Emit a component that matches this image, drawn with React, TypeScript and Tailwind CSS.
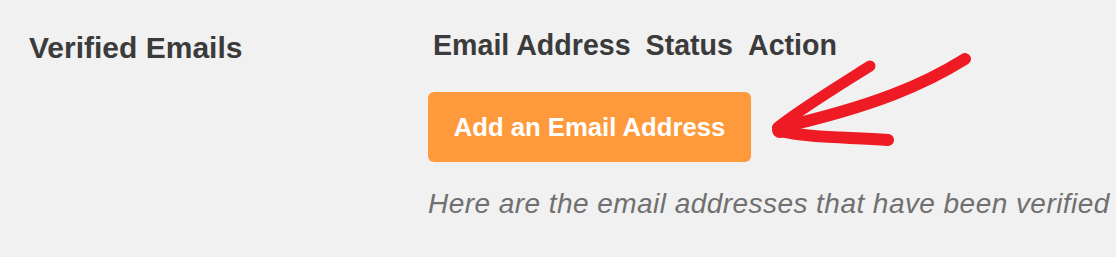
import React from "react";

export default function App() {
  return (
    <div
      className="relative h-[257px] w-[1116px] overflow-hidden bg-[#f1f1f1] flex"
      style={{ fontFamily: '"Liberation Sans", Arial, sans-serif' }}
    >
      <div className="w-[428px] shrink-0 pl-[29px] pt-[33px]">
        <div className="text-[30px] leading-[30px] font-bold text-[#3b3b3b]">Verified Emails</div>
      </div>
      <div className="flex flex-col pt-[31px]">
        <div className="ml-[5px] flex gap-[15px] text-[28.6px] leading-[28px] font-bold text-[#3b3b3b]">
          <span>Email Address</span>
          <span>Status</span>
          <span>Action</span>
        </div>
        <button className="mt-[33px] flex h-[70px] w-[323px] items-center justify-center rounded-[6px] bg-[#fe9a3c] text-[25.7px] font-bold text-white">
          Add an Email Address
        </button>
        <div className="mt-[28px] whitespace-nowrap text-[28px] leading-[28px] italic tracking-[0.45px] text-[#707070]">
          Here are the email addresses that have been verified
        </div>
      </div>
      <svg
        className="pointer-events-none absolute left-0 top-0"
        width="1116"
        height="257"
        viewBox="0 0 1116 257"
        fill="none"
      >
        <g stroke="#ee1b24" strokeLinecap="round" strokeLinejoin="round">
          <path d="M965 59 C 925 84, 875 106, 778 128" strokeWidth="12" />
          <path d="M870 66 C 835 88, 802 108, 778 127" strokeWidth="11" />
          <path d="M780 131 C 810 138, 845 137, 888 140" strokeWidth="12" />
        </g>
        <circle cx="780" cy="130" r="8" fill="#ee1b24" />
      </svg>
    </div>
  );
}
